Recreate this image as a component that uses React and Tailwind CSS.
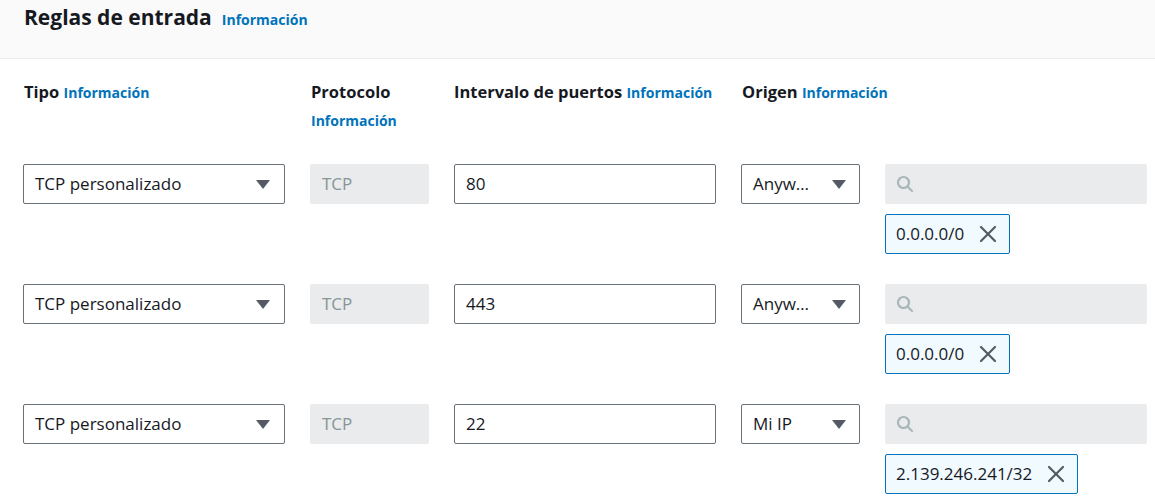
import React from "react";

const Info = ({ className = "" }) => (
  <a className={"text-[14px] font-bold text-[#0073bb] " + className}>Información</a>
);

const Caret = () => (
  <svg width="14" height="9" viewBox="0 0 14 9" className="shrink-0">
    <polygon points="0,0 14,0 7,9" fill="#545b64" />
  </svg>
);

const SearchIcon = () => (
  <svg width="18" height="18" viewBox="0 0 18 18" fill="none" stroke="#aab7b8" strokeWidth="2.2" strokeLinecap="round">
    <circle cx="7.5" cy="7.5" r="5.5" />
    <line x1="11.5" y1="11.5" x2="16" y2="16" />
  </svg>
);

const XIcon = () => (
  <svg width="18" height="18" viewBox="0 0 18 18" fill="none" stroke="#545b64" strokeWidth="2.2" strokeLinecap="round">
    <line x1="2" y1="2" x2="16" y2="16" />
    <line x1="16" y1="2" x2="2" y2="16" />
  </svg>
);

const rows = [
  { port: "80", origin: "Anyw…", token: "0.0.0.0/0" },
  { port: "443", origin: "Anyw…", token: "0.0.0.0/0" },
  { port: "22", origin: "Mi IP", token: "2.139.246.241/32" },
];

export default function App() {
  return (
    <div className="w-[1155px] h-[501px] overflow-hidden bg-white text-[#16191f] font-['Open_Sans','Liberation_Sans',sans-serif]">
      <div className="h-[59px] bg-[#fafafa] border-b border-[#eaeded] pl-6 pt-[2px]">
        <div className="flex items-baseline">
          <h2 className="text-[21px] leading-[30px] font-bold">Reglas de entrada</h2>
          <Info className="ml-[10px]" />
        </div>
      </div>
      <div className="pl-[23px]">
        <div className="grid grid-cols-[262px_119px_262px_119px_262px] gap-x-[25px] pt-[19px] h-[105px] text-[16.5px] leading-[28px]">
          <div className="pl-px"><span className="font-bold">Tipo</span> <Info /></div>
          <div className="pl-px"><span className="font-bold">Protocolo</span> <Info /></div>
          <div><span className="font-bold">Intervalo de puertos</span> <Info /></div>
          <div className="pl-px whitespace-nowrap"><span className="font-bold">Origen</span> <Info /></div>
          <div></div>
        </div>
        <div className="flex flex-col gap-[30px]">
          {rows.map((r, i) => (
            <div key={i} className="grid grid-cols-[262px_119px_262px_119px_262px] gap-x-[25px] items-start text-[17px]">
              <div className="h-10 border border-[#687078] rounded-[2px] flex items-center justify-between pl-[11px] pr-[14px]">
                <span>TCP personalizado</span>
                <Caret />
              </div>
              <div className="h-10 bg-[#e9ebed] rounded-[2px] flex items-center pl-3 text-[#879596]">TCP</div>
              <div className="h-10 border border-[#687078] rounded-[2px] flex items-center pl-[11px]">{r.port}</div>
              <div className="h-10 border border-[#687078] rounded-[2px] flex items-center justify-between pl-[11px] pr-[13px]">
                <span>{r.origin}</span>
                <Caret />
              </div>
              <div className="flex flex-col items-start gap-[10px]">
                <div className="w-full h-10 bg-[#e9ebed] rounded-[2px] flex items-center pl-[11px]">
                  <SearchIcon />
                </div>
                <div className="h-10 border border-[#0073bb] bg-[#f1faff] rounded-[2px] flex items-center pl-[10px] pr-[12px] gap-[15px]">
                  <span>{r.token}</span>
                  <XIcon />
                </div>
              </div>
            </div>
          ))}
        </div>
      </div>
    </div>
  );
}
